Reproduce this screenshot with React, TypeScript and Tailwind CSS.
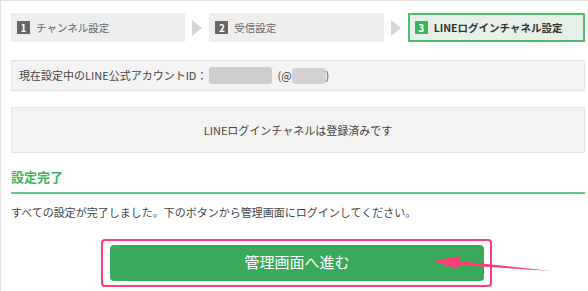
const font = "font-['Meiryo','Noto_Sans_CJK_JP',sans-serif]";

function Step({ n, label, active }: { n: number; label: string; active?: boolean }) {
  return (
    <div
      className={
        active
          ? 'flex h-[29px] flex-1 items-center gap-[6px] border-2 border-[#4cc06a] bg-[#e6f0e9] pl-[5px]'
          : 'flex h-[29px] flex-1 items-center gap-[6px] bg-[#eeeeee] pl-[6px]'
      }
    >
      <span
        className={
          'flex h-[13px] w-[13px] items-center justify-center text-[10px] font-bold leading-none text-white ' +
          (active ? 'bg-[#3cb55a]' : 'bg-[#666666]')
        }
      >
        {n}
      </span>
      <span className={active ? 'text-[10.5px] font-bold text-[#333]' : 'text-[10.5px] text-[#666]'}>
        {label}
      </span>
    </div>
  );
}

function Chevron() {
  return (
    <div className="flex w-[24px] items-center justify-center">
      <svg width="12" height="16" viewBox="0 0 12 16">
        <path d="M1 0 L11 8 L1 16 Z" fill="#d6d6d6" />
      </svg>
    </div>
  );
}

export default function App() {
  return (
    <div className={`${font} h-[291px] w-[588px] overflow-hidden bg-white`}>
      <div className="h-full border-l border-t border-[#e2e2e2] pl-[10px] pr-[3px] pt-[12px]">
        {/* Steps */}
        <div className="flex">
          <Step n={1} label="チャンネル設定" />
          <Chevron />
          <Step n={2} label="受信設定" />
          <Chevron />
          <Step n={3} label="LINEログインチャネル設定" active />
        </div>

        {/* Account ID */}
        <div className="mt-[18px] flex h-[31px] items-center border border-[#e4e4e4] bg-[#f3f3f3] pl-[7px] text-[11px] text-[#444]">
          <span>現在設定中のLINE公式アカウントID：</span>
          <span className="ml-[2px] h-[17px] w-[63px] rounded-[3px] bg-[#cfcfcf]" />
          <span className="ml-[5px]">(@</span>
          <span className="h-[16px] w-[34px] rounded-[4px] bg-[#d2d2d2]" />
          <span>)</span>
        </div>

        {/* Registered */}
        <div className="mt-[16px] flex h-[46px] items-center justify-center border border-[#e4e4e4] bg-[#f3f3f3] text-[11px] text-[#444]">
          LINEログインチャネルは登録済みです
        </div>

        {/* Complete */}
        <h2 className="mt-[15px] border-b-2 border-[#6cc581] pb-[6px] text-[13px] font-bold leading-[18px] text-[#3cb55a]">
          設定完了
        </h2>
        <p className="mt-[10px] text-[11px] text-[#444]">
          すべての設定が完了しました。下のボタンから管理画面にログインしてください。
        </p>

        <div className="relative mt-[18px] flex justify-center">
          <div className="mr-[3px] rounded-[4px] border-2 border-[#ff3c78] py-[4px] pl-[7px] pr-[6px]">
            <button className="flex h-[36px] w-[374px] items-center justify-center rounded-[4px] bg-[#3aaa5a] text-[15px] text-white">
              管理画面へ進む
            </button>
          </div>
          <svg
            className="absolute left-[418px] top-[12px]"
            width="128"
            height="26"
            viewBox="0 0 128 26"
          >
            <path d="M122 20 L30 10 L31 5 L4 10 L29 18 L29 14 Z" fill="#ff3c78" />
          </svg>
        </div>
      </div>
    </div>
  );
}
